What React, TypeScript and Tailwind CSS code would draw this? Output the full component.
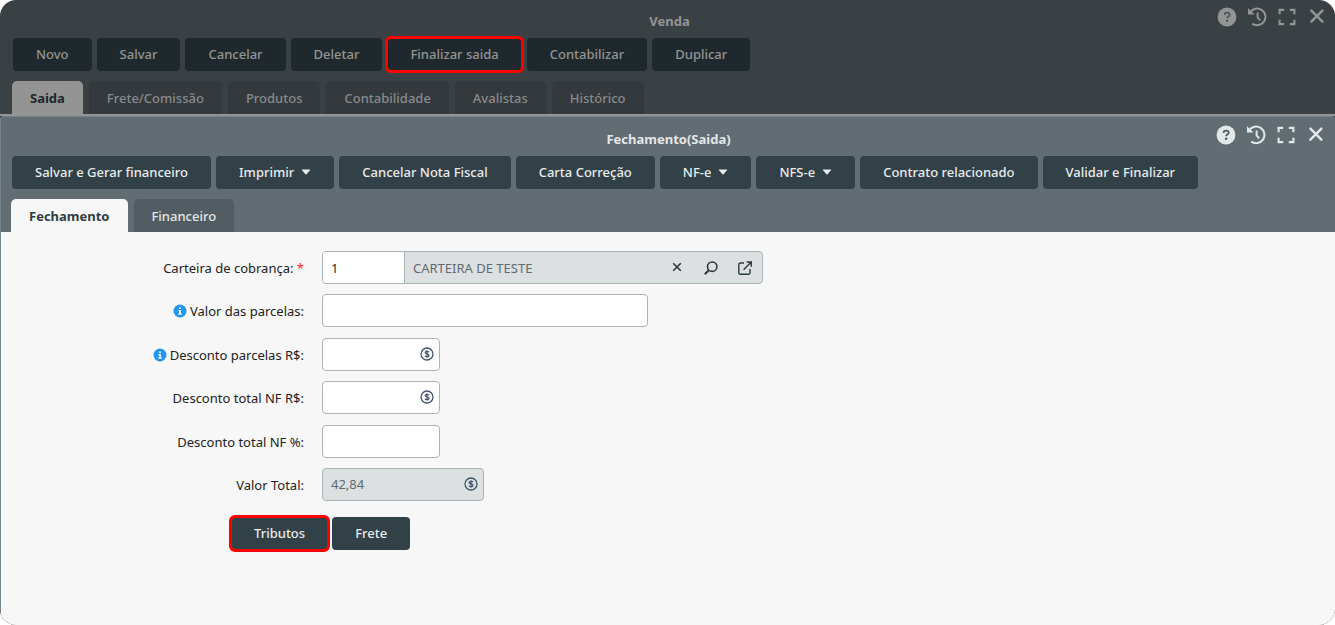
import { useState } from 'react';
import type { ReactNode } from 'react';
import clsx from 'clsx';

const SALE_ACTIONS = ['Novo', 'Salvar', 'Cancelar', 'Deletar', 'Finalizar saida', 'Contabilizar', 'Duplicar'];
const SALE_TABS = ['Saida', 'Frete/Comissão', 'Produtos', 'Contabilidade', 'Avalistas', 'Histórico'];

const CLOSING_ACTIONS = [
  { label: 'Salvar e Gerar financeiro' },
  { label: 'Imprimir', menu: true },
  { label: 'Cancelar Nota Fiscal' },
  { label: 'Carta Correção' },
  { label: 'NF-e', menu: true },
  { label: 'NFS-e', menu: true },
  { label: 'Contrato relacionado' },
  { label: 'Validar e Finalizar' },
];
const CLOSING_TABS = ['Fechamento', 'Financeiro'];

const HIGHLIGHT = 'outline-[3px] -outline-offset-1 outline-[#ff0000] outline-solid';

function HelpIcon() {
  return (
    <svg viewBox="0 0 20 20" className="size-5">
      <circle cx="10" cy="10" r="9.4" fill="currentColor" />
      <path
        d="M7.5 7.8c.2-1.4 1.1-2.1 2.6-2.1s2.6.8 2.6 2.1c0 1.7-2.4 1.6-2.6 3.3"
        className="fill-none stroke-[#4b565b]"
        strokeWidth="1.7"
      />
      <circle cx="10.1" cy="13.8" r="1.2" className="fill-[#4b565b]" />
    </svg>
  );
}

function HistoryIcon() {
  return (
    <svg viewBox="0 0 20 20" className="size-5" fill="none" stroke="currentColor" strokeWidth="2">
      <path d="M3 5.6A8.3 8.3 0 1 1 5.2 16.6" />
      <path d="M1 1.2v6.4h6.6z" fill="currentColor" stroke="none" />
      <path d="M10.6 5.4v5l2.6 3" strokeWidth="1.9" />
    </svg>
  );
}

function ExpandIcon() {
  return (
    <svg viewBox="0 0 20 20" className="size-5" fill="none" stroke="currentColor" strokeWidth="2.1">
      <path d="M2.6 7.2V2.9h4.6M12.8 2.9h4.6v4.3M17.4 12.8v4.3h-4.6M7.2 17.1H2.6v-4.3" />
    </svg>
  );
}

function CloseIcon() {
  return (
    <svg viewBox="0 0 20 20" className="size-5" fill="none" stroke="currentColor" strokeWidth="2.5" strokeLinecap="round">
      <path d="m4.4 3.7 11 11M15.4 3.7l-11 11" />
    </svg>
  );
}

function WindowControls() {
  return (
    <div className="flex h-5 gap-[10px]">
      <button type="button" aria-label="Ajuda"><HelpIcon /></button>
      <button type="button" aria-label="Histórico"><HistoryIcon /></button>
      <button type="button" aria-label="Tela cheia"><ExpandIcon /></button>
      <button type="button" aria-label="Fechar"><CloseIcon /></button>
    </div>
  );
}

function CoinIcon() {
  return (
    <svg viewBox="0 0 14 14" className="size-[14px]" fill="none" stroke="#44546f">
      <circle cx="7" cy="7" r="6" strokeWidth="1.3" />
      <path d="M9 5.2C8.6 4.5 7.9 4.3 7 4.3c-1.1 0-1.9.5-1.9 1.3C5.1 7.5 9 6.4 9 8.4c0 .8-.9 1.3-2 1.3-.9 0-1.7-.3-2.1-1M7 3.2v7.6" strokeWidth="1.2" />
    </svg>
  );
}

function InfoIcon() {
  return (
    <svg viewBox="0 0 14 14" className="size-[14px]">
      <circle cx="7" cy="7" r="6.5" fill="#2196f3" />
      <path d="M6.1 3.3h1.8v1.6H6.1zM5.3 5.9h2.6v3.6h.9v1.2H5.2V9.5h.9V7.1h-.8z" fill="#eaf5fe" />
    </svg>
  );
}

function Caret() {
  return (
    <svg viewBox="0 0 10 6" className="h-[6px] w-[10px]" fill="currentColor">
      <path d="M1.4.4h7.2c.6 0 .8.5.4.9L5.5 5.2c-.3.3-.7.3-1 0L1 1.3C.6.9.8.4 1.4.4z" />
    </svg>
  );
}

function Tabs({ items, dimmed }: { items: string[]; dimmed?: boolean }) {
  const [active, setActive] = useState(items[0]);
  return (
    <div role="tablist" className={clsx('flex gap-[6px]', dimmed ? 'px-3' : 'px-[10px]')}>
      {items.map((item) => {
        const on = item === active;
        return (
          <button
            key={item}
            type="button"
            role="tab"
            aria-selected={on}
            onClick={() => setActive(item)}
            className={clsx(
              'h-[33px] rounded-t-[5px] px-[18px]',
              on ? 'font-bold' : 'font-medium',
              on && dimmed && 'bg-[#949494] text-[#1e272b]',
              on && !dimmed && 'bg-[#f7f7f7] text-[#2f3d43]',
              !on && dimmed && 'bg-[#33393c] text-[#888b8d]',
              !on && !dimmed && 'bg-[#515d63] text-[#e4e7e8]',
            )}
          >
            {item}
          </button>
        );
      })}
    </div>
  );
}

interface FieldProps {
  id: string;
  label: string;
  info?: boolean;
  required?: boolean;
  children: ReactNode;
}

function Field({ id, label, info, required, children }: FieldProps) {
  return (
    <div className="flex items-center gap-[18px] odd:mb-[10px] even:mb-[11px]">
      <label htmlFor={id} className="flex w-[292px] items-center justify-end gap-[3px] text-[#222]">
        {info && <InfoIcon />}
        <span>
          {label}:{required && <span className="text-[#ff1a1a]"> *</span>}
        </span>
      </label>
      {children}
    </div>
  );
}

function MoneyInput({ id, value, readOnly }: { id: string; value?: string; readOnly?: boolean }) {
  return (
    <div
      className={clsx(
        'flex h-[33px] items-center rounded-[4px] border border-[#a9b3b8] pr-[5px] pb-px',
        readOnly ? 'w-[162px] bg-[#dce0e1]' : 'w-[118px] bg-white',
      )}
    >
      <input
        id={id}
        defaultValue={value}
        readOnly={readOnly}
        className="h-full min-w-0 flex-1 bg-transparent px-2 text-[#5f6b70] outline-none"
      />
      <CoinIcon />
    </div>
  );
}

export default function App() {
  return (
    <div className="flex min-h-screen flex-col overflow-hidden rounded-[16px] bg-[#3a4144] font-['Noto_Sans',sans-serif] text-[13px] leading-[18px]">
      <header className="border-b-2 border-[#949494]">
        <div className="grid h-[38px] grid-cols-[1fr_auto_1fr] pt-[7px] pr-2 pl-3 text-[#949494]">
          <h1 className="col-start-2 pt-[5px] font-bold">Venda</h1>
          <div className="flex justify-end">
            <WindowControls />
          </div>
        </div>
        <div className="flex gap-[5px] px-[13px]">
          {SALE_ACTIONS.map((label) => (
            <button
              key={label}
              type="button"
              className={clsx(
                'h-[33px] rounded-[4px] bg-[#1f292d] px-[23px] pb-[2px] font-medium text-[#949494]',
                label === 'Finalizar saida' && HIGHLIGHT,
              )}
            >
              {label}
            </button>
          ))}
        </div>
        <div className="pt-[10px]">
          <Tabs items={SALE_TABS} dimmed />
        </div>
      </header>

      <section className="flex flex-1 flex-col rounded-t-[4px] border-t border-l border-[#74838c] bg-[#616d72]">
        <div className="grid h-[39px] grid-cols-[1fr_auto_1fr] pt-2 pr-[9px] pl-[10px] text-[#e4e7e8]">
          <h2 className="col-start-2 pt-[5px] font-bold">Fechamento(Saida)</h2>
          <div className="flex justify-end">
            <WindowControls />
          </div>
        </div>
        <div className="flex gap-[5px] px-[11px]">
          {CLOSING_ACTIONS.map(({ label, menu }) => (
            <button
              key={label}
              type="button"
              className="flex h-[33px] items-center gap-[7px] rounded-[4px] bg-[#324147] px-[23px] pb-[2px] font-medium text-[#e9ecec]"
            >
              {label}
              {menu && <Caret />}
            </button>
          ))}
        </div>
        <div className="pt-[10px]">
          <Tabs items={CLOSING_TABS} />
        </div>

        <form className="flex-1 bg-[#f7f7f7] pt-[19px]" onSubmit={(e) => e.preventDefault()}>
          <div className="px-[11px]">
            <Field id="carteira" label="Carteira de cobrança" required>
              <div className="flex h-[33px] w-[441px] overflow-hidden rounded-[4px] border border-[#a9b3b8] bg-[#dce0e1]">
                <input
                  id="carteira"
                  defaultValue="1"
                  className="w-[82px] border-r border-[#a9b3b8] bg-white px-2 text-[#2b2b2b] outline-none"
                />
                <input
                  aria-label="Nome da carteira"
                  readOnly
                  value="CARTEIRA DE TESTE"
                  className="min-w-0 flex-1 px-2 text-[#5f6b70] outline-none"
                />
                <div className="flex items-center gap-[18px] pr-[9px] text-[#2b3a41]">
                  <button type="button" aria-label="Limpar">
                    <svg viewBox="0 0 16 16" className="size-4" fill="none" stroke="currentColor" strokeWidth="1.6">
                      <path d="m4.2 3.2 7.6 7.6M11.8 3.2l-7.6 7.6" />
                    </svg>
                  </button>
                  <button type="button" aria-label="Pesquisar">
                    <svg viewBox="0 0 16 16" className="size-4" fill="none" stroke="currentColor" strokeWidth="1.6">
                      <circle cx="9.2" cy="6.7" r="4.7" />
                      <path d="m5.8 10.2-4 4" strokeWidth="2" />
                    </svg>
                  </button>
                  <button type="button" aria-label="Abrir">
                    <svg viewBox="0 0 16 16" className="size-4" fill="none" stroke="currentColor" strokeWidth="1.4">
                      <path d="M7 3H3.2A1.4 1.4 0 0 0 1.8 4.4v8.4a1.4 1.4 0 0 0 1.4 1.4h8.4a1.4 1.4 0 0 0 1.4-1.4V9" />
                      <path d="M9.6 2h4.7v4.7M14 2.3 6.6 9.7" />
                    </svg>
                  </button>
                </div>
              </div>
            </Field>
            <Field id="valor-parcelas" label="Valor das parcelas" info>
              <input
                id="valor-parcelas"
                className="h-[33px] w-[326px] rounded-[4px] border border-[#a9b3b8] bg-white px-2 outline-none"
              />
            </Field>
            <Field id="desconto-parcelas" label="Desconto parcelas R$" info>
              <MoneyInput id="desconto-parcelas" />
            </Field>
            <Field id="desconto-nf" label="Desconto total NF R$">
              <MoneyInput id="desconto-nf" />
            </Field>
            <Field id="desconto-nf-pct" label="Desconto total NF %">
              <input
                id="desconto-nf-pct"
                className="h-[33px] w-[118px] rounded-[4px] border border-[#a9b3b8] bg-white px-2 outline-none"
              />
            </Field>
            <Field id="valor-total" label="Valor Total">
              <MoneyInput id="valor-total" value="42,84" readOnly />
            </Field>
          </div>
          <div className="flex gap-1 pt-[5px] pl-[230px]">
            {['Tributos', 'Frete'].map((label) => (
              <button
                key={label}
                type="button"
                className={clsx(
                  'h-[33px] rounded-[4px] bg-[#324147] px-[23px] pb-[2px] font-medium text-[#e9ecec]',
                  label === 'Tributos' && HIGHLIGHT,
                )}
              >
                {label}
              </button>
            ))}
          </div>
        </form>
      </section>
    </div>
  );
}
